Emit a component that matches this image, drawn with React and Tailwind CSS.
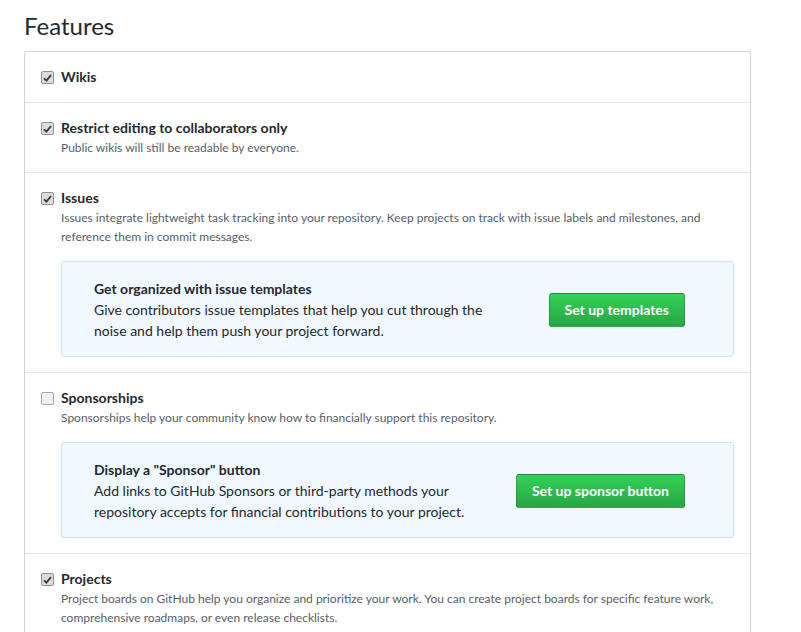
import React, { useState } from 'react';

const Checkbox = ({ checked, onChange }) => (
    <button
        type="button"
        onClick={onChange}
        className={`mt-[4px] flex h-[13px] w-[13px] shrink-0 items-center justify-center rounded-[2px] border ${
            checked ? 'border-[#8f8f8f] bg-[#dcdcdc]' : 'border-[#a8a8a8] bg-[#f1f1f1]'
        }`}
    >
        {checked && (
            <svg width="9" height="8" viewBox="0 0 9 8">
                <path d="M1 4.3 L3.4 6.6 L8 1.2" fill="none" stroke="#3b3b3b" strokeWidth="1.8" />
            </svg>
        )}
    </button>
);

const Promo = ({ title, text, action }) => (
    <div className="mt-[15px] flex items-center justify-between rounded-[3px] border border-[#c8e1ff] bg-[#f1f8ff] pb-[15px] pl-8 pr-12 pt-4">
        <div className="w-[400px] text-[14px] leading-[21px] text-[#24292e]">
            <div className="font-bold">{title}</div>
            <div>{text}</div>
        </div>
        <button
            type="button"
            className="h-[34px] rounded-[3px] border border-[rgba(27,31,35,0.2)] bg-gradient-to-b from-[#34d058] to-[#28a745] px-[15px] text-[14px] font-bold text-white"
        >
            {action}
        </button>
    </div>
);

const Feature = ({ title, description, checked, onToggle, children, last }) => (
    <div className={`px-4 py-[15px] ${last ? '' : 'border-b border-[#e1e4e8]'}`}>
        <div className="flex gap-[7px]">
            <Checkbox checked={checked} onChange={onToggle} />
            <div className="flex-1">
                <div className="text-[14px] font-bold leading-[20px] text-[#24292e]">{title}</div>
                {description && (
                    <div className="text-[12px] leading-[19px] text-[#586069]">{description}</div>
                )}
                {children}
            </div>
        </div>
    </div>
);

const App = () => {
    const [features, setFeatures] = useState({
        wikis: true,
        restrict: true,
        issues: true,
        sponsorships: false,
        projects: true,
    });

    const toggle = (key) => setFeatures({ ...features, [key]: !features[key] });

    return (
        <div className="min-h-screen bg-white px-6 pt-[11px] font-['Lato','Liberation_Sans',sans-serif]">
            <h2 className="mb-[10px] text-[24px] font-normal leading-[30px] text-[#24292e]">Features</h2>
            <div className="w-[727px] rounded-t-[3px] border border-b-0 border-[#d1d5da]">
                <Feature title="Wikis" checked={features.wikis} onToggle={() => toggle('wikis')} />
                <Feature
                    title="Restrict editing to collaborators only"
                    description="Public wikis will still be readable by everyone."
                    checked={features.restrict}
                    onToggle={() => toggle('restrict')}
                />
                <Feature
                    title="Issues"
                    description="Issues integrate lightweight task tracking into your repository. Keep projects on track with issue labels and milestones, and reference them in commit messages."
                    checked={features.issues}
                    onToggle={() => toggle('issues')}
                >
                    <Promo
                        title="Get organized with issue templates"
                        text="Give contributors issue templates that help you cut through the noise and help them push your project forward."
                        action="Set up templates"
                    />
                </Feature>
                <Feature
                    title="Sponsorships"
                    description="Sponsorships help your community know how to financially support this repository."
                    checked={features.sponsorships}
                    onToggle={() => toggle('sponsorships')}
                >
                    <Promo
                        title={'Display a "Sponsor" button'}
                        text="Add links to GitHub Sponsors or third-party methods your repository accepts for financial contributions to your project."
                        action="Set up sponsor button"
                    />
                </Feature>
                <Feature
                    title="Projects"
                    description="Project boards on GitHub help you organize and prioritize your work. You can create project boards for specific feature work, comprehensive roadmaps, or even release checklists."
                    checked={features.projects}
                    onToggle={() => toggle('projects')}
                    last
                />
            </div>
        </div>
    );
};

export default App;
